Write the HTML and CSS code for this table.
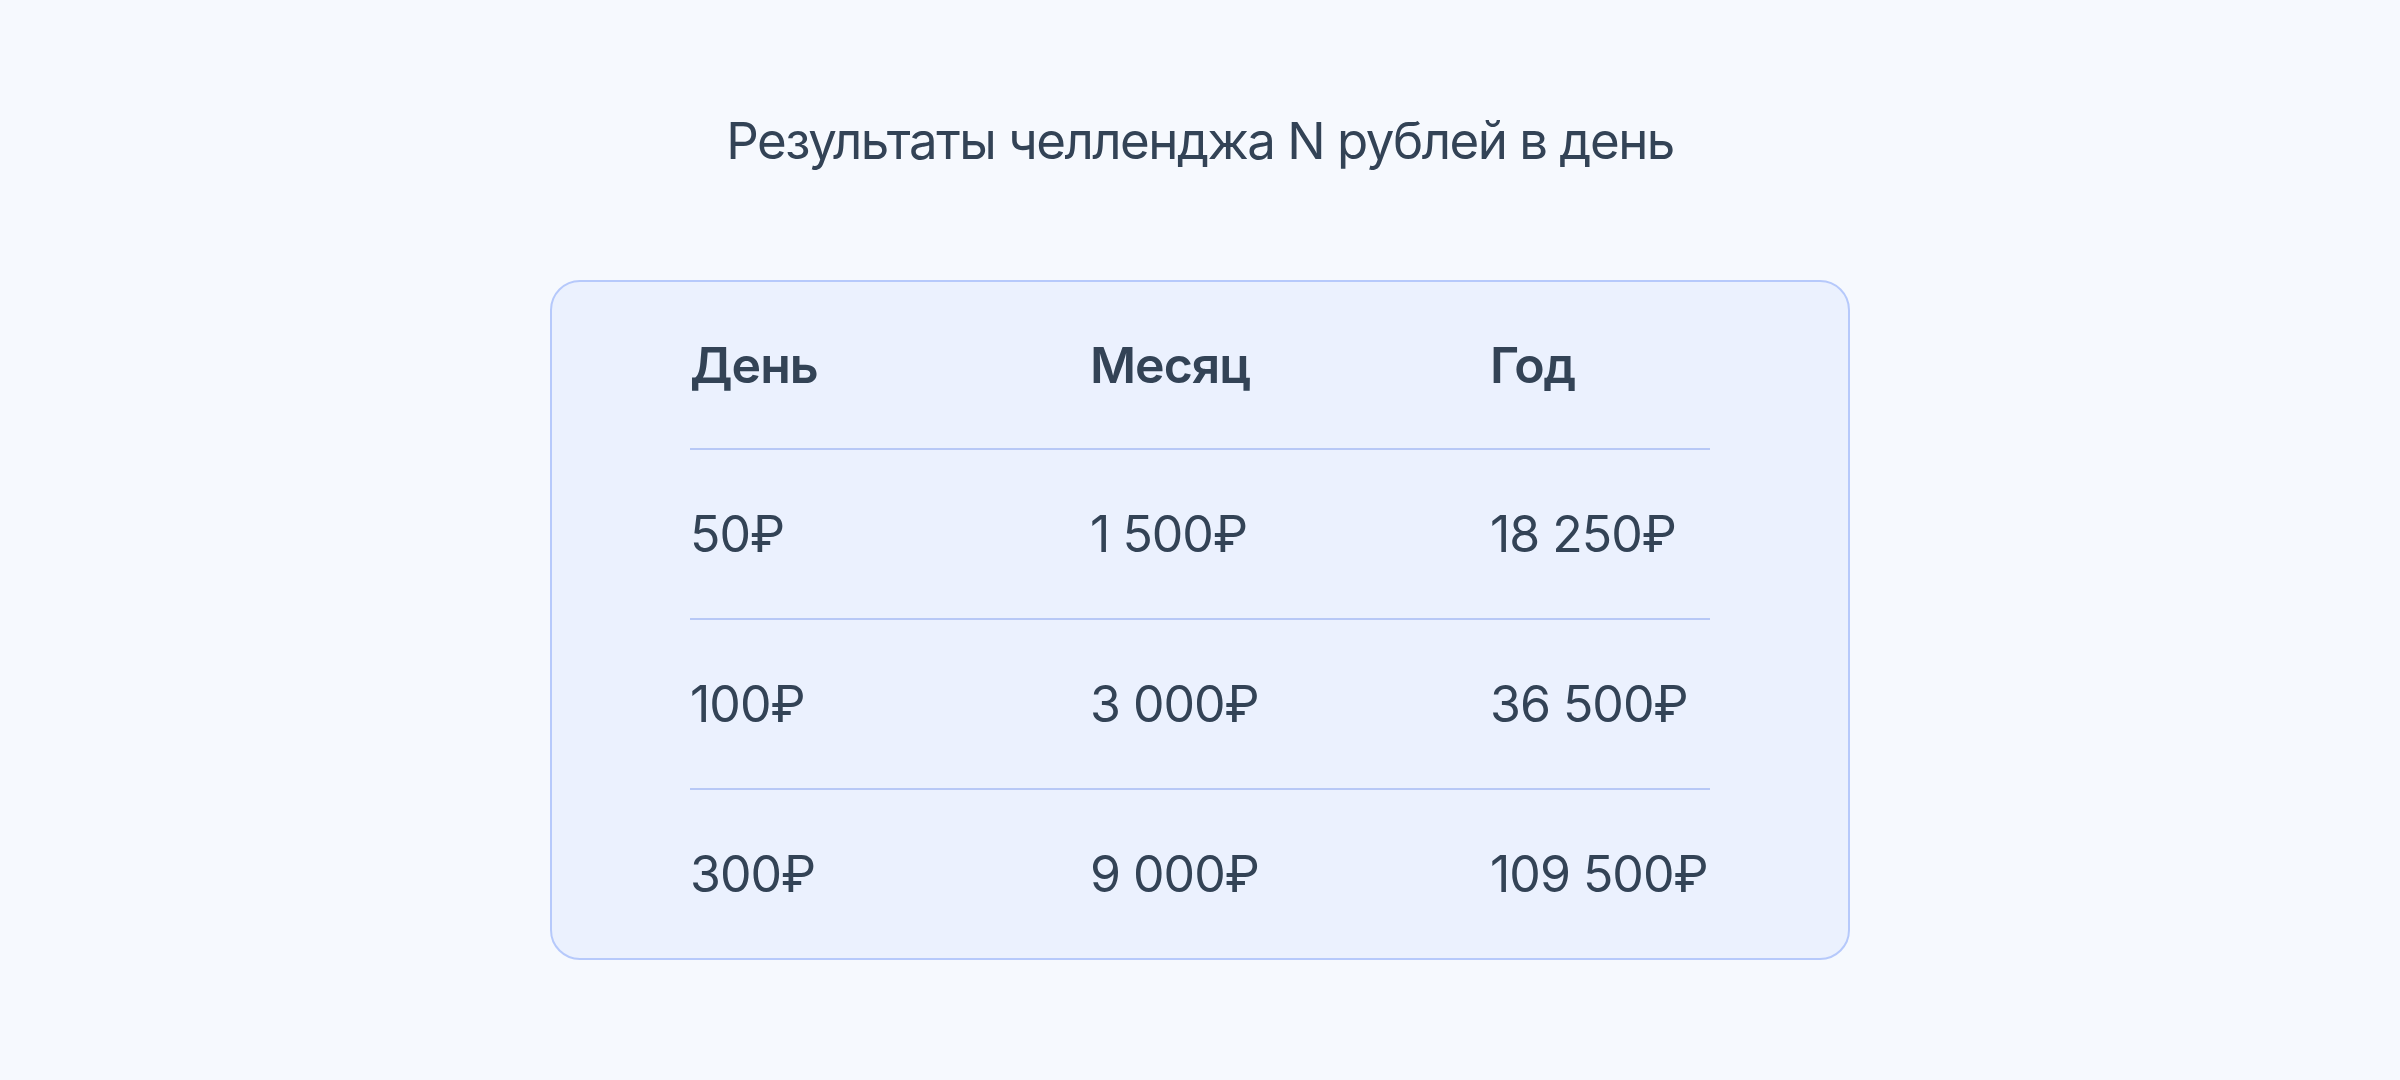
FILE: index.html
```html
<!DOCTYPE html>
<html lang="ru">
<head>
<meta charset="utf-8">
<title>Результаты челленджа</title>
<link rel="stylesheet" href="styles.css">
</head>
<body>
<main class="page">
  <h1 class="title">Результаты челленджа N рублей в день</h1>
  <section class="card">
    <div class="row head">
      <div class="cell">День</div>
      <div class="cell">Месяц</div>
      <div class="cell">Год</div>
    </div>
    <div class="row">
      <div class="cell">50₽</div>
      <div class="cell">1 500₽</div>
      <div class="cell">18 250₽</div>
    </div>
    <div class="row">
      <div class="cell">100₽</div>
      <div class="cell">3 000₽</div>
      <div class="cell">36 500₽</div>
    </div>
    <div class="row last">
      <div class="cell">300₽</div>
      <div class="cell">9 000₽</div>
      <div class="cell">109 500₽</div>
    </div>
  </section>
</main>
</body>
</html>
```
FILE: styles.css
```css
* { box-sizing: border-box; }
html, body {
  margin: 0;
  padding: 0;
  background: #f6f9fe;
}
body {
  font-family: Inter, "Noto Sans", "Liberation Sans", sans-serif;
  color: #334356;
}
.page {
  display: flex;
  flex-direction: column;
  align-items: center;
  padding-top: 110px;
  height: 1080px;
}
.title {
  margin: 0;
  font-size: 51px;
  line-height: 62px;
  font-weight: 400;
  letter-spacing: -1.5px;
}
.card {
  margin-top: 108px;
  width: 1300px;
  background: #ebf1fe;
  border: 2px solid #b6c9fb;
  border-radius: 30px;
  padding: 0 138px;
}
.row {
  display: grid;
  grid-template-columns: 400px 400px 1fr;
  align-items: center;
  height: 170px;
  border-bottom: 2px solid #b7c8f6;
  font-size: 50px;
  letter-spacing: -1px;
}
.row.last { border-bottom: none; height: 168px; }
.head { font-weight: 600; height: 168px; }
```
